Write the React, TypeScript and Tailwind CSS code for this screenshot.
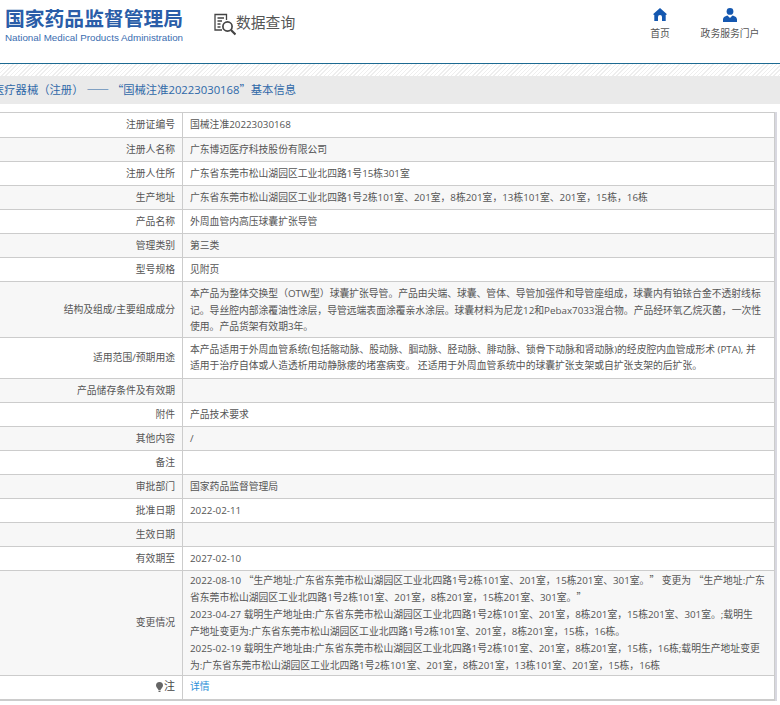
const rows: [string, string[], string][] = [
  ["注册证编号", ["国械注准20223030168"], "h-[25px]"],
  ["注册人名称", ["广东博迈医疗科技股份有限公司"], "h-[24px]"],
  ["注册人住所", ["广东省东莞市松山湖园区工业北四路1号15栋301室"], "h-[24px]"],
  ["生产地址", ["广东省东莞市松山湖园区工业北四路1号2栋101室、201室，8栋201室，13栋101室、201室，15栋，16栋"], "h-[24px]"],
  ["产品名称", ["外周血管内高压球囊扩张导管"], "h-[24px]"],
  ["管理类别", ["第三类"], "h-[24px]"],
  ["型号规格", ["见附页"], "h-[24px]"],
  ["结构及组成/主要组成成分", [
    "本产品为整体交换型（OTW型）球囊扩张导管。产品由尖端、球囊、管体、导管加强件和导管座组成，球囊内有铂铱合金不透射线标",
    "记。导丝腔内部涂覆油性涂层，导管远端表面涂覆亲水涂层。球囊材料为尼龙12和Pebax7033混合物。产品经环氧乙烷灭菌，一次性",
    "使用。产品货架有效期3年。",
  ], "h-[56px]"],
  ["适用范围/预期用途", [
    "本产品适用于外周血管系统(包括髂动脉、股动脉、腘动脉、胫动脉、腓动脉、锁骨下动脉和肾动脉)的经皮腔内血管成形术 (PTA), 并",
    "适用于治疗自体或人造透析用动静脉瘘的堵塞病变。 还适用于外周血管系统中的球囊扩张支架或自扩张支架的后扩张。",
  ], "h-[41px]"],
  ["产品储存条件及有效期", [], "h-[24px]"],
  ["附件", ["产品技术要求"], "h-[24px]"],
  ["其他内容", ["/"], "h-[24px]"],
  ["备注", [], "h-[24px]"],
  ["审批部门", ["国家药品监督管理局"], "h-[24px]"],
  ["批准日期", ["2022-02-11"], "h-[24px]"],
  ["生效日期", [], "h-[24px]"],
  ["有效期至", ["2027-02-10"], "h-[24px]"],
  ["变更情况", [
    "2022-08-10 “生产地址:广东省东莞市松山湖园区工业北四路1号2栋101室、201室，15栋201室、301室。” 变更为 “生产地址:广东",
    "省东莞市松山湖园区工业北四路1号2栋101室、201室，8栋201室，15栋201室、301室。”",
    "2023-04-27 载明生产地址由:广东省东莞市松山湖园区工业北四路1号2栋101室、201室，8栋201室，15栋201室、301室。;载明生",
    "产地址变更为:广东省东莞市松山湖园区工业北四路1号2栋101室、201室，8栋201室，15栋，16栋。",
    "2025-02-19 载明生产地址由:广东省东莞市松山湖园区工业北四路1号2栋101室、201室，8栋201室，15栋，16栋;载明生产地址变更",
    "为:广东省东莞市松山湖园区工业北四路1号2栋101室、201室，8栋201室，13栋101室、201室，15栋，16栋",
  ], "h-[105px]"],
];

const font = { fontFamily: '"Open Sans", "Noto Sans CJK SC", sans-serif' };

// Quotes and full-width commas take the wide CJK forms seen in the reference.
function Cjk({ text }: { text: string }) {
  const parts = text.split(/([“”（）—]+|，)/).filter((p) => p !== "");
  return (
    <>
      {parts.map((p, i) =>
        /^[“”（）—]+$/.test(p) ? (
          <span key={i} className="font-['Noto_Sans_CJK_SC']">{p}</span>
        ) : p === "，" ? (
          <span key={i} className="font-['Noto_Sans_CJK_TC']">{p}</span>
        ) : (
          <span key={i}>{p}</span>
        ),
      )}
    </>
  );
}

export default function App() {
  return (
    <div lang="zh-CN" className="h-[705px] w-[780px] overflow-hidden bg-white text-[9.8px] text-[#555] [text-spacing-trim:space-all]" style={font}>
      <header className="flex h-[64px] border-b border-[#1d6a92]">
        <div className="w-[214px] pl-[5px] pt-[6px] font-['Liberation_Sans','Noto_Sans_CJK_SC',sans-serif]">
          <div className="text-[19.8px] leading-[26px] font-bold whitespace-nowrap text-[#2a5da8]">国家药品监督管理局</div>
          <div className="text-[9.8px] leading-[12px] whitespace-nowrap text-[#3a6db0]">National Medical Products Administration</div>
        </div>
        <div className="flex items-start pt-[13px]">
          <svg width="22" height="23" viewBox="0 0 22 23" fill="none" stroke="#444" strokeWidth="1.3">
            <path d="M8 17H1V1.5H12.5V7" />
            <path d="M3.5 5H10M3.5 8H8M3.5 11H6.5M3.5 14H6.5" />
            <circle cx="13.5" cy="13.5" r="4.6" strokeWidth="1.7" />
            <path d="M17 17l4.5 4.5" strokeWidth="2.2" />
          </svg>
          <span className="text-[14.8px] leading-[19px] text-[#555]">数据查询</span>
        </div>
        <div className="ml-auto flex pr-[20px] pt-[8px]">
          <div className="flex w-[60px] flex-col items-center">
            <svg width="14" height="13" viewBox="0 0 14 13" fill="#1558b0">
              <path d="M7 0L14 6.2L12.7 6.9V13H9V9a2 2 0 0 0-4 0v4H1.3V6.9L0 6.2z" />
            </svg>
            <span className="mt-[6px] leading-[14px]">首页</span>
          </div>
          <div className="ml-[10px] flex w-[60px] flex-col items-center">
            <svg width="14" height="14" viewBox="0 0 14 14" fill="#1558b0">
              <circle cx="7" cy="3.4" r="3.4" />
              <path d="M0 14V11.5C0 9 2.5 8 4.5 7.4L7 10l2.5-2.6C11.5 8 14 9 14 11.5V14z" />
            </svg>
            <span className="mt-[5px] leading-[14px] whitespace-nowrap">政务服务门户</span>
          </div>
        </div>
      </header>
      <div className="h-[12px] bg-[repeating-linear-gradient(135deg,#eeeeee_0,#eeeeee_1px,#ffffff_1px,#ffffff_3px)]" />
      <div className="flex h-[28px] items-center overflow-hidden bg-[#eaeaea] text-[11.3px] whitespace-nowrap text-[#2f68a8]">
        <span className="ml-[-7px]"><Cjk text="医疗器械（注册） —— “国械注准20223030168”基本信息" /></span>
      </div>
      <div className="mt-[8px] mr-[3px] ml-[-1px] border-r-[2px] border-[#d8d8e0]">
        <table className="w-full table-fixed border-collapse border-b-[2px] border-[#cccccc]">
          <colgroup><col className="w-[183px]" /><col /></colgroup>
          <tbody>
            {rows.map(([label, lines, h], i) => (
              <tr key={label} className={`${h} ${i % 2 ? "bg-[#f7f7f7]" : "bg-white"}`}>
                <td className="border border-[#cccccc] pr-[7px] text-right leading-[16px]">{label}</td>
                <td className="border border-[#cccccc] py-[1px] pr-[2px] pl-[7px] leading-[16px] whitespace-nowrap">
                  {lines.map((l) => <div key={l}><Cjk text={l} /></div>)}
                </td>
              </tr>
            ))}
            <tr className="h-[24px] bg-white">
              <td className="border border-[#cccccc] pr-[7px] text-right">
                <span className="inline-flex items-center justify-end gap-[1px] text-[11px] text-[#444]">
                  <svg width="7" height="10" viewBox="0 0 7 10" fill="#666">
                    <path d="M3.5 0a3.5 3.5 0 0 1 3.5 3.5C7 5.5 5 6.5 4.5 8h-2C2 6.5 0 5.5 0 3.5A3.5 3.5 0 0 1 3.5 0z" />
                    <rect x="2.5" y="8.6" width="2" height="1.4" />
                  </svg>
                  注
                </span>
              </td>
              <td className="border border-[#cccccc] pl-[7px] text-[#2a8fd8]">详情</td>
            </tr>
          </tbody>
        </table>
      </div>
    </div>
  );
}
